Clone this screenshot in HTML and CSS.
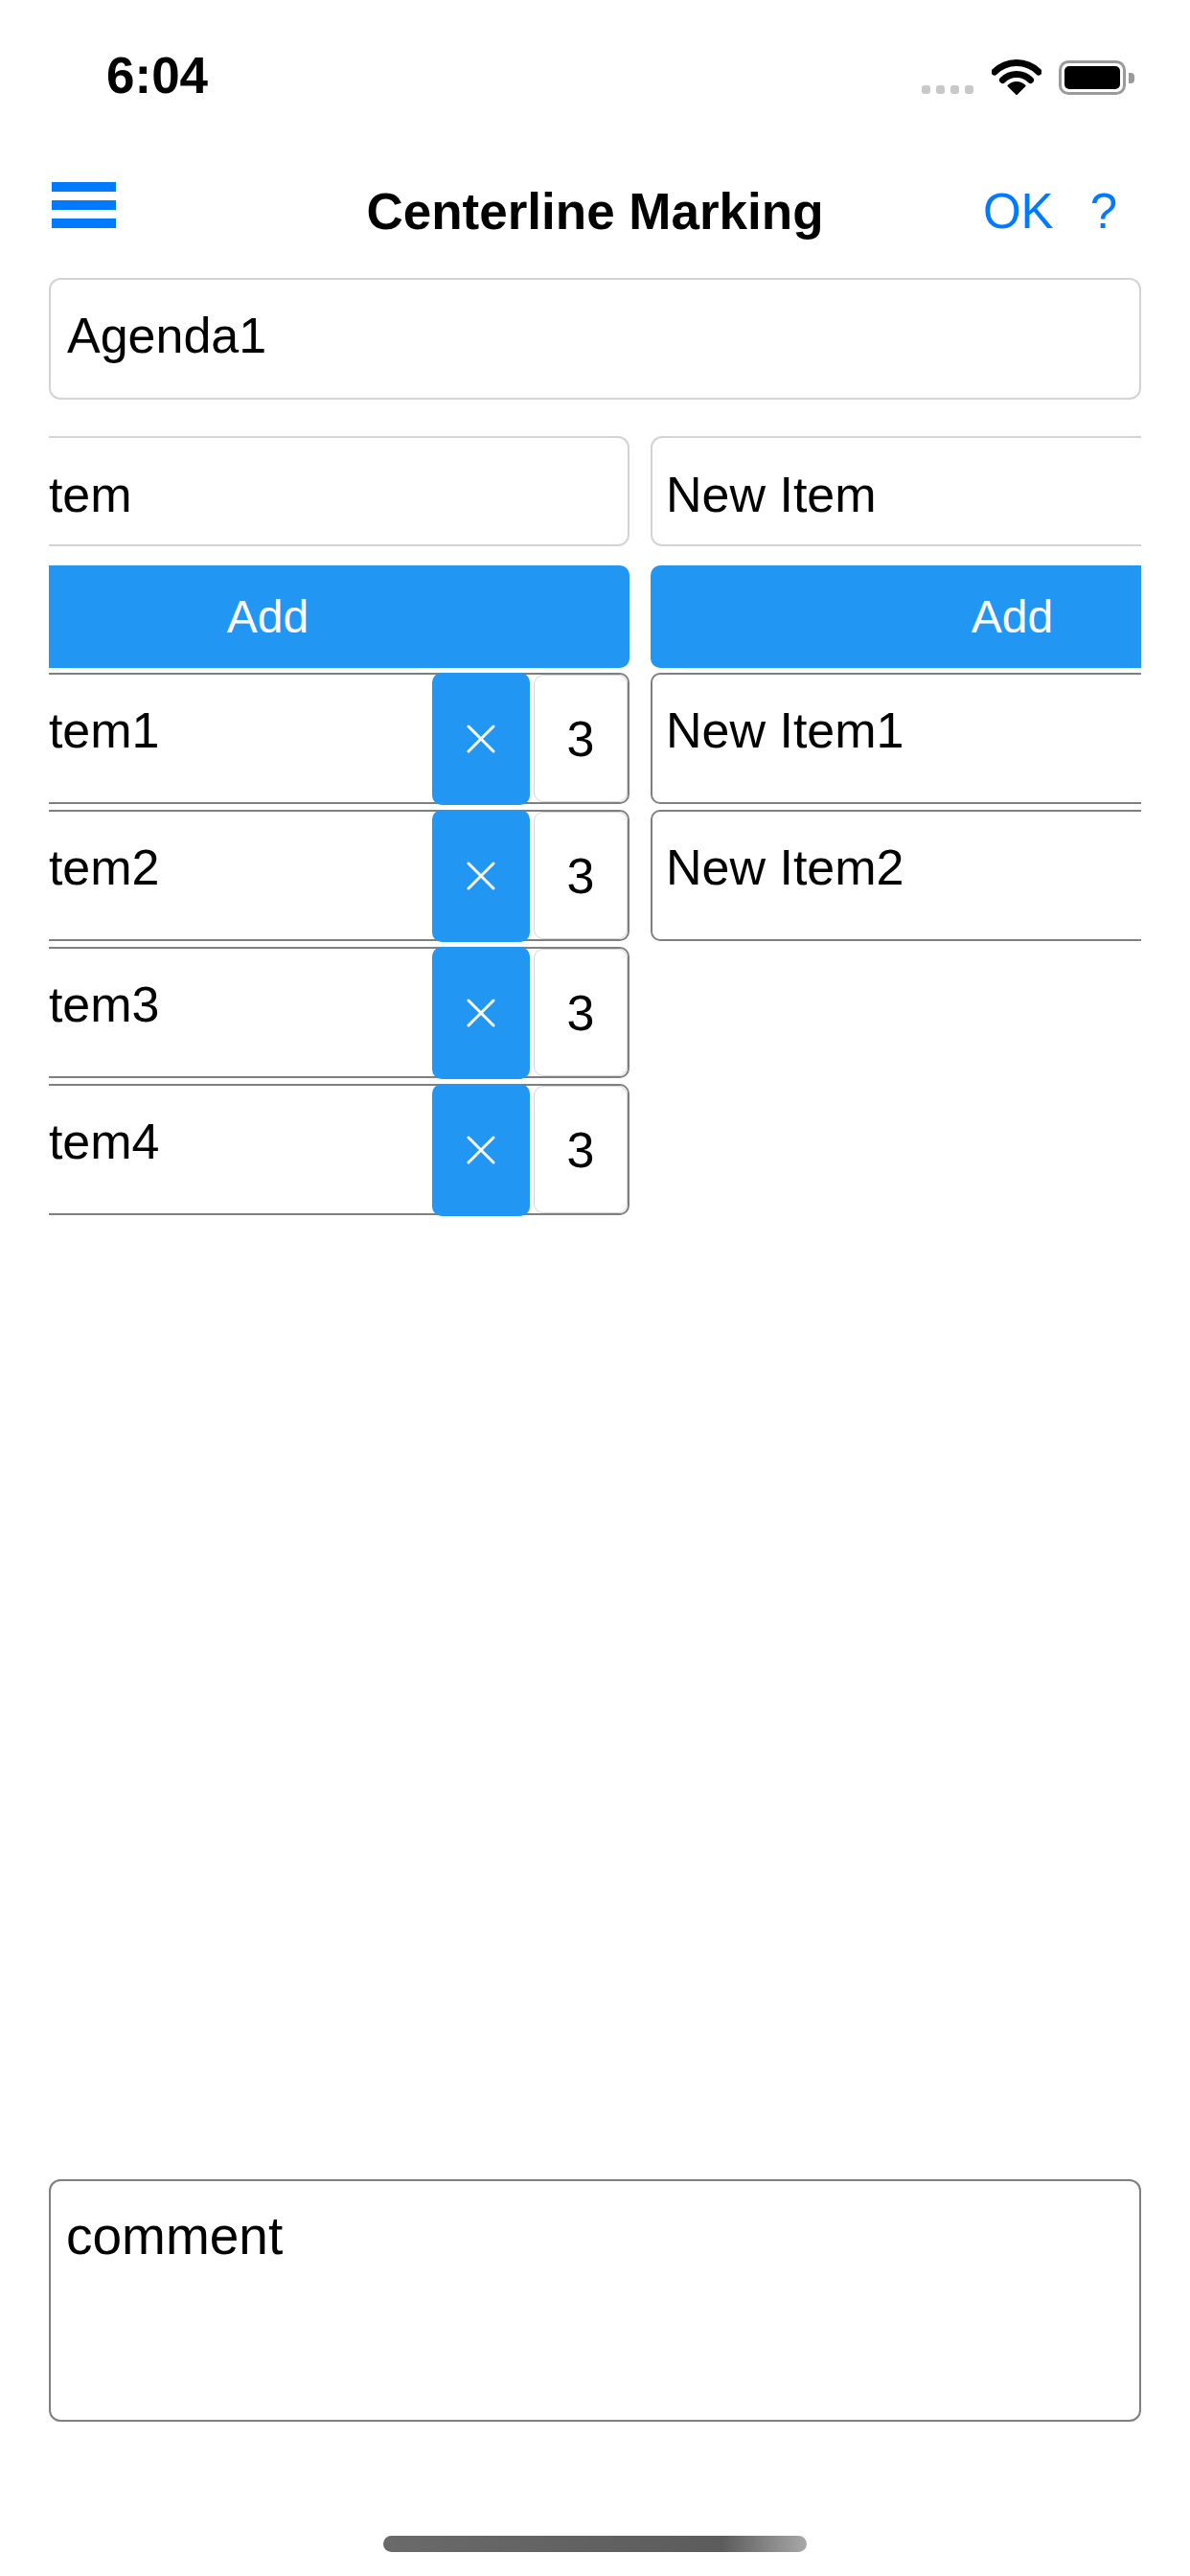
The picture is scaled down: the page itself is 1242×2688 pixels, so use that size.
FILE: index.html
```html
<!DOCTYPE html>
<html lang="en">
<head>
    <meta charset="UTF-8">
    <meta name="viewport" content="width=device-width, initial-scale=1.0">
    <title>Centerline Marking</title>
    <link rel="stylesheet" href="styles.css">
</head>
<body>
    <div class="status-bar">
        <span class="time">6:04</span>
        <div class="status-icons">
            <div class="signal"><i></i><i></i><i></i><i></i></div>
            <svg class="wifi" width="52" height="38" viewBox="0 0 52 38">
                <path d="M3 14 A32.5 32.5 0 0 1 49 14" fill="none" stroke="#000" stroke-width="7" stroke-linecap="round"/>
                <path d="M11.5 22.5 A20.5 20.5 0 0 1 40.5 22.5" fill="none" stroke="#000" stroke-width="7" stroke-linecap="round"/>
                <path d="M26 37 L17.5 28.5 A12 12 0 0 1 34.5 28.5 Z" fill="#000" stroke="#000" stroke-width="2" stroke-linejoin="round"/>
            </svg>
            <div class="battery"><div class="battery-level"></div></div>
            <div class="battery-cap"></div>
        </div>
    </div>

    <header class="nav">
        <div class="menu"><span></span><span></span><span></span></div>
        <h1 class="title">Centerline Marking</h1>
        <div class="actions">
            <span>OK</span>
            <span class="help">?</span>
        </div>
    </header>

    <main>
        <input class="field agenda" type="text" value="Agenda1">

        <div class="lists">
            <div class="track">
                <section class="column">
                    <input class="field new-item" type="text" value="New Item">
                    <button class="add-btn">Add</button>
                    <div class="item">
                        <textarea class="item-name">New Item1</textarea>
                        <button class="remove"><svg width="30" height="30" viewBox="0 0 30 30"><path d="M2 2 L28 28 M28 2 L2 28" stroke="#fff" stroke-width="3" stroke-linecap="round"/></svg></button>
                        <div class="count">3</div>
                    </div>
                    <div class="item">
                        <textarea class="item-name">New Item2</textarea>
                        <button class="remove"><svg width="30" height="30" viewBox="0 0 30 30"><path d="M2 2 L28 28 M28 2 L2 28" stroke="#fff" stroke-width="3" stroke-linecap="round"/></svg></button>
                        <div class="count">3</div>
                    </div>
                    <div class="item">
                        <textarea class="item-name">New Item3</textarea>
                        <button class="remove"><svg width="30" height="30" viewBox="0 0 30 30"><path d="M2 2 L28 28 M28 2 L2 28" stroke="#fff" stroke-width="3" stroke-linecap="round"/></svg></button>
                        <div class="count">3</div>
                    </div>
                    <div class="item">
                        <textarea class="item-name">New Item4</textarea>
                        <button class="remove"><svg width="30" height="30" viewBox="0 0 30 30"><path d="M2 2 L28 28 M28 2 L2 28" stroke="#fff" stroke-width="3" stroke-linecap="round"/></svg></button>
                        <div class="count">3</div>
                    </div>
                </section>

                <section class="column">
                    <input class="field new-item" type="text" value="New Item">
                    <button class="add-btn">Add</button>
                    <div class="item">
                        <textarea class="item-name">New Item1</textarea>
                        <button class="remove"><svg width="30" height="30" viewBox="0 0 30 30"><path d="M2 2 L28 28 M28 2 L2 28" stroke="#fff" stroke-width="3" stroke-linecap="round"/></svg></button>
                        <div class="count">3</div>
                    </div>
                    <div class="item">
                        <textarea class="item-name">New Item2</textarea>
                        <button class="remove"><svg width="30" height="30" viewBox="0 0 30 30"><path d="M2 2 L28 28 M28 2 L2 28" stroke="#fff" stroke-width="3" stroke-linecap="round"/></svg></button>
                        <div class="count">3</div>
                    </div>
                </section>
            </div>
        </div>
    </main>

    <footer>
        <textarea class="comment">comment</textarea>
        <div class="home-bar"></div>
    </footer>
</body>
</html>
```

FILE: styles.css
```css
body {
    font-family: "Liberation Sans", Arial, sans-serif;
    margin: 0;
    padding: 0;
    display: flex;
    flex-direction: column;
    min-height: 100vh;
    background: #fff;
    color: #000;
}

/* status bar */
.status-bar {
    height: 157px;
    display: flex;
    align-items: center;
    justify-content: space-between;
    padding: 0 58px 0 111px;
    box-sizing: border-box;
}
.time {
    font-size: 53px;
    font-weight: bold;
    line-height: 1;
}
.status-icons {
    display: flex;
    align-items: flex-end;
    height: 38px;
    margin-top: 2px;
}
.signal {
    display: flex;
    gap: 6px;
    margin-right: 19px;
    margin-bottom: 1px;
}
.signal i {
    width: 9px;
    height: 9px;
    border-radius: 3px;
    background: #c8c8c8;
}
.wifi {
    display: block;
    margin-right: 18px;
}
.battery {
    width: 70px;
    height: 36px;
    border: 3px solid #9a9a9a;
    border-radius: 10px;
    box-sizing: border-box;
    padding: 3px;
}
.battery-level {
    width: 100%;
    height: 100%;
    background: #000;
    border-radius: 5px;
}
.battery-cap {
    width: 6px;
    height: 11px;
    margin: 0 0 12px 3px;
    background: #9a9a9a;
    border-radius: 0 4px 4px 0;
}

/* nav */
.nav {
    height: 126px;
    display: grid;
    grid-template-columns: 1fr auto 1fr;
    align-items: center;
    padding: 0 54px;
}
.menu {
    display: flex;
    flex-direction: column;
    gap: 9px;
    margin-bottom: 12px;
    justify-self: start;
}
.menu span {
    width: 67px;
    height: 10px;
    background: #007aff;
}
.title {
    margin: 0;
    font-size: 53px;
    font-weight: bold;
    line-height: 1;
}
.actions {
    justify-self: end;
    margin-right: 22px;
    display: flex;
    gap: 38px;
    color: #007aff;
    font-size: 51px;
    line-height: 1;
}

/* fields */
main {
    flex-grow: 1;
    padding: 0 51px;
}
.field, .item-name, .comment {
    font-family: inherit;
    font-size: 52px;
    color: #000;
    background: #fff;
    outline: none;
    box-sizing: border-box;
    display: block;
    width: 100%;
    margin: 0;
}
.agenda {
    height: 127px;
    margin-top: 7px;
    border: 2px solid #d3d3d3;
    border-radius: 12px;
    padding: 0 14px 8px 17px;
}

/* scrolled list columns */
.lists {
    overflow: hidden;
    margin-top: 38px;
}
.track {
    display: flex;
    gap: 22px;
    margin-left: -149px;
}
.column {
    flex: 0 0 755px;
    display: flex;
    flex-direction: column;
}
.new-item {
    height: 115px;
    border: 2px solid #d3d3d3;
    border-radius: 12px;
    padding: 6px 14px 0 14px;
}
.add-btn {
    height: 107px;
    margin: 20px 0 5px;
    border: none;
    border-radius: 10px;
    background: #2196f3;
    color: #fff;
    font-family: inherit;
    font-size: 48px;
}
.item {
    display: flex;
    height: 137px;
    margin-bottom: 6px;
    border: 2.5px solid #7f7f7f;
    border-radius: 10px;
    box-sizing: border-box;
}
.item-name {
    flex: 1;
    min-width: 0;
    border: none;
    border-radius: 10px;
    resize: none;
    overflow: hidden;
    line-height: 60px;
    padding: 28px 14px 0 14px;
}
.remove {
    flex: 0 0 102px;
    margin: -2.5px 0;
    border: none;
    border-radius: 10px;
    background: #2196f3;
    display: flex;
    align-items: center;
    justify-content: center;
    padding: 0;
}
.remove svg {
    display: block;
}
.count {
    flex: 0 0 98px;
    margin-left: 4px;
    border: 1px solid #d6d6d6;
    border-radius: 10px;
    box-sizing: border-box;
    display: flex;
    align-items: center;
    justify-content: center;
    font-size: 52px;
}

/* footer */
footer {
    padding: 0 51px 25px;
    display: flex;
    flex-direction: column;
    align-items: center;
}
.comment {
    height: 253px;
    border: 2.5px solid #7f7f7f;
    border-radius: 12px;
    resize: none;
    overflow: hidden;
    font-size: 55px;
    line-height: 60px;
    padding: 27px 14px 0 16px;
}
.home-bar {
    width: 442px;
    height: 17px;
    margin-top: 119px;
    border-radius: 9px;
    background: linear-gradient(to right, #6a6a6a, #5c5c5c 80%, #a8a8a8);
}
```
